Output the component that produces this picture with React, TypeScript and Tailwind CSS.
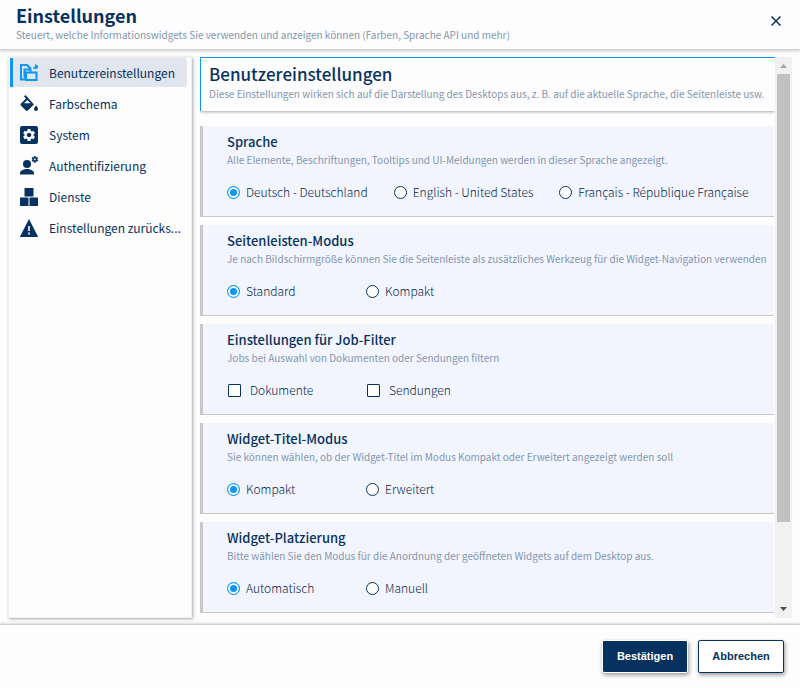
import { useState, type ReactNode } from "react";

type Section = { id: string; title: string; text: string; kind: "radio" | "checkbox"; wide?: boolean; options: string[] };

const sections: Section[] = [
  { id: "sprache", title: "Sprache", text: "Alle Elemente, Beschriftungen, Tooltips und UI-Meldungen werden in dieser Sprache angezeigt.", kind: "radio", wide: true, options: ["Deutsch - Deutschland", "English - United States", "Français - République Française"] },
  { id: "seitenleiste", title: "Seitenleisten-Modus", text: "Je nach Bildschirmgröße können Sie die Seitenleiste als zusätzliches Werkzeug für die Widget-Navigation verwenden", kind: "radio", options: ["Standard", "Kompakt"] },
  { id: "jobfilter", title: "Einstellungen für Job-Filter", text: "Jobs bei Auswahl von Dokumenten oder Sendungen filtern", kind: "checkbox", options: ["Dokumente", "Sendungen"] },
  { id: "widgettitel", title: "Widget-Titel-Modus", text: "Sie können wählen, ob der Widget-Titel im Modus Kompakt oder Erweitert angezeigt werden soll", kind: "radio", options: ["Kompakt", "Erweitert"] },
  { id: "platzierung", title: "Widget-Platzierung", text: "Bitte wählen Sie den Modus für die Anordnung der geöffneten Widgets auf dem Desktop aus.", kind: "radio", options: ["Automatisch", "Manuell"] },
];

function Icon({ children }: { children: ReactNode }) {
  return (
    <svg viewBox="0 0 20 20" className="size-5 shrink-0" fill="currentColor" aria-hidden="true">
      {children}
    </svg>
  );
}

const gear =
  "M19.14 12.94c.04-.3.06-.61.06-.94 0-.32-.02-.64-.07-.94l2.03-1.58c.18-.14.23-.41.12-.61l-1.92-3.32c-.12-.22-.37-.29-.59-.22l-2.39.96c-.5-.38-1.03-.7-1.62-.94l-.36-2.54c-.04-.24-.24-.41-.48-.41h-3.84c-.24 0-.43.17-.47.41l-.36 2.54c-.59.24-1.13.57-1.62.94l-2.39-.96c-.22-.08-.47 0-.59.22L2.74 8.87c-.12.21-.08.47.12.61l2.03 1.58c-.05.3-.09.63-.09.94s.02.64.07.94l-2.03 1.58c-.18.14-.23.41-.12.61l1.92 3.32c.12.22.37.29.59.22l2.39-.96c.5.38 1.03.7 1.62.94l.36 2.54c.05.24.24.41.48.41h3.84c.24 0 .44-.17.47-.41l.36-2.54c.59-.24 1.13-.56 1.62-.94l2.39.96c.22.08.47 0 .59-.22l1.92-3.32c.12-.22.07-.47-.12-.61l-2.01-1.58zM12 15.6c-1.98 0-3.6-1.62-3.6-3.6s1.62-3.6 3.6-3.6 3.6 1.62 3.6 3.6-1.62 3.6-3.6 3.6z";

const navItems: { label: string; icon: ReactNode }[] = [
  {
    label: "Benutzereinstellungen",
    icon: (
      <g fill="#e1e5ee" stroke="#0a96fa" strokeWidth="2">
        <path d="M2 2h6l3 3v11.500H2z" />
        <path d="M5.500 6.500h6V14h-6z" />
        <path d="M7 9.500h10.500V17H7z" />
        <path fill="#0a96fa" stroke="none" d="M16.500.8 18 2.500h1v2L17.500 6h-3L14 4.500h1.500z" />
      </g>
    ),
  },
  {
    label: "Farbschema",
    icon: <path fillRule="evenodd" d="M6.500 1 5 2.500l2 2L2 9.500c-.6.6-.6 1.500 0 2.100l4.800 4.800c.6.6 1.500.6 2.100 0l6-5.900zM8.300 6l3.300 3.300H5zM17 11.500s-2 2.200-2 3.500a2 2 0 0 0 4 0c0-1.300-2-3.500-2-3.500z" />,
  },
  {
    label: "System",
    icon: (
      <>
        <rect x="1" y="1" width="18" height="18" rx="2" />
        <path transform="translate(2.600 2.600) scale(.62)" fill="#fdfdfd" d={gear} />
      </>
    ),
  },
  {
    label: "Authentifizierung",
    icon: (
      <>
        <circle cx="8" cy="8" r="4" />
        <path d="M1 18.500V17c0-2.400 4-4 7-4s7 1.600 7 4v1.500z" />
        <path transform="translate(12 -.500) scale(.32)" stroke="currentColor" strokeWidth="1.500" d={gear} />
      </>
    ),
  },
  {
    label: "Dienste",
    icon: (
      <>
        <rect x="5.500" y="1" width="9" height="8.500" rx=".5" />
        <rect x="1" y="10.500" width="8.500" height="8.500" rx=".5" />
        <rect x="10.500" y="10.500" width="8.500" height="8.500" rx=".5" />
      </>
    ),
  },
  { label: "Einstellungen zurücks...", icon: <path fillRule="evenodd" d="M10 1 .8 19h18.400zM9.200 8v5h1.600V8zm0 6.500v2h1.600v-2z" /> },
];

function Choice({ section, index, label }: { section: Section; index: number; label: string }) {
  const radio = section.kind === "radio";
  return (
    <label className={`flex shrink-0 items-center text-xs leading-5 font-light whitespace-nowrap text-[#07264a] ${section.wide ? "mr-[26px]" : "w-[139px]"} ${radio ? "gap-[6px]" : "gap-[9px]"}`}>
      {radio ? (
        <input
          type="radio"
          name={section.id}
          defaultChecked={index === 0}
          className="size-[13px] shrink-0 appearance-none rounded-full border border-[#07325f] bg-white checked:border-[#0a96fa] checked:bg-[#0a96fa] checked:shadow-[inset_0_0_0_2px_#fff]"
        />
      ) : (
        <input type="checkbox" name={section.id} className="ml-px size-[13px] shrink-0 appearance-none rounded-[1px] border border-[#07325f] bg-white checked:bg-[#0a96fa]" />
      )}
      {label}
    </label>
  );
}

export default function App() {
  const [active, setActive] = useState(0);
  return (
    <div className="flex h-screen flex-col bg-[#fdfdfd] font-['Noto_Sans_CJK_JP',sans-serif] text-[#07325f]">
      <header className="flex h-[50px] shrink-0 items-start justify-between border-b border-[#d2d2d2] px-4 pt-[3px] shadow-[0_1px_3px_#0003]">
        <div>
          <h1 className="text-lg leading-6 font-bold">Einstellungen</h1>
          <p className="text-[10px] leading-4 text-[#8496ae]">Steuert, welche Informationswidgets Sie verwenden und anzeigen können (Farben, Sprache API und mehr)</p>
        </div>
        <button type="button" aria-label="Schließen" className="mt-[10px] flex size-4 items-center justify-center">
          <svg viewBox="0 0 16 16" className="size-4" stroke="currentColor" strokeWidth="1.500" fill="none">
            <path d="m3.500 3.500 9 9m0-9-9 9" />
          </svg>
        </button>
      </header>

      <main className="flex min-h-0 flex-1 gap-2 px-2 pt-[7px] pb-[6px]">
        <nav className="w-[184px] shrink-0 border border-[#eee] px-px shadow-[1px_1px_3px_#0005]">
          {navItems.map((item, i) => (
            <button
              key={item.label}
              type="button"
              onClick={() => setActive(i)}
              className={`mb-[2px] flex h-[29px] w-[177px] items-center gap-[10px] rounded-r-[3px] border-l-[3px] pl-[6px] text-xs ${i === active ? "border-[#0a96fa] bg-[#e1e5ee]" : "border-transparent"}`}
            >
              <Icon>{item.icon}</Icon>
              <span className="whitespace-nowrap">{item.label}</span>
            </button>
          ))}
        </nav>

        <div className="flex min-w-0 flex-1">
          <div className="flex min-w-0 flex-1 flex-col overflow-hidden">
            <div className="h-[54px] shrink-0 border-t border-l border-[#0a96fa] pt-1 pl-2 shadow-[0_1px_3px_#0005]">
              <h2 className="text-[17px] leading-6 font-medium">Benutzereinstellungen</h2>
              <p className="text-[10px] leading-4 whitespace-nowrap text-[#8496ae]">Diese Einstellungen wirken sich auf die Darstellung des Desktops aus, z. B. auf die aktuelle Sprache, die Seitenleiste usw.</p>
            </div>
            <div className="mt-[15px] mr-px flex flex-col gap-2">
              {sections.map((s) => (
                <fieldset key={s.id} aria-labelledby={s.id} className="h-[91px] border-b border-l-[3px] border-[#c8c8c8] bg-[#f2f5fd] pt-[6px] pl-6">
                  <h3 id={s.id} className="text-[13px] leading-5 font-medium">{s.title}</h3>
                  <p className="text-[10px] leading-4 whitespace-nowrap text-[#8496ae]">{s.text}</p>
                  <div className="mt-[14px] flex">
                    {s.options.map((o, i) => (
                      <Choice key={o} section={s} index={i} label={o} />
                    ))}
                  </div>
                </fieldset>
              ))}
            </div>
          </div>
          <div className="flex w-[17px] shrink-0 flex-col items-center justify-between bg-[#f1f1f1]" aria-hidden="true">
            <svg viewBox="0 0 17 17" className="h-[17px] w-[17px] shrink-0" fill="#a3a3a3"><path d="M5 11h7L8.500 7z" /></svg>
            <div className="flex w-[13px] flex-1 flex-col"><div className="h-[85%] bg-[#c1c1c1]" /></div>
            <svg viewBox="0 0 17 17" className="h-[17px] w-[17px] shrink-0" fill="#505050"><path d="M5 6h7l-3.500 4z" /></svg>
          </div>
        </div>
      </main>

      <footer className="flex h-[64px] shrink-0 items-center justify-end gap-[10px] border-t border-[#d2d2d2] pr-4 font-['Liberation_Sans',sans-serif] text-[11px] font-bold shadow-[0_-1px_2px_#0002]">
        <button type="button" className="h-[33px] w-[86px] rounded-[2px] border border-white bg-[#07325f] text-white shadow-[1px_2px_4px_#0006]">Bestätigen</button>
        <button type="button" className="h-[33px] w-[86px] rounded-[2px] border border-[#07325f] bg-white shadow-[1px_2px_4px_#0006]">Abbrechen</button>
      </footer>
    </div>
  );
}
